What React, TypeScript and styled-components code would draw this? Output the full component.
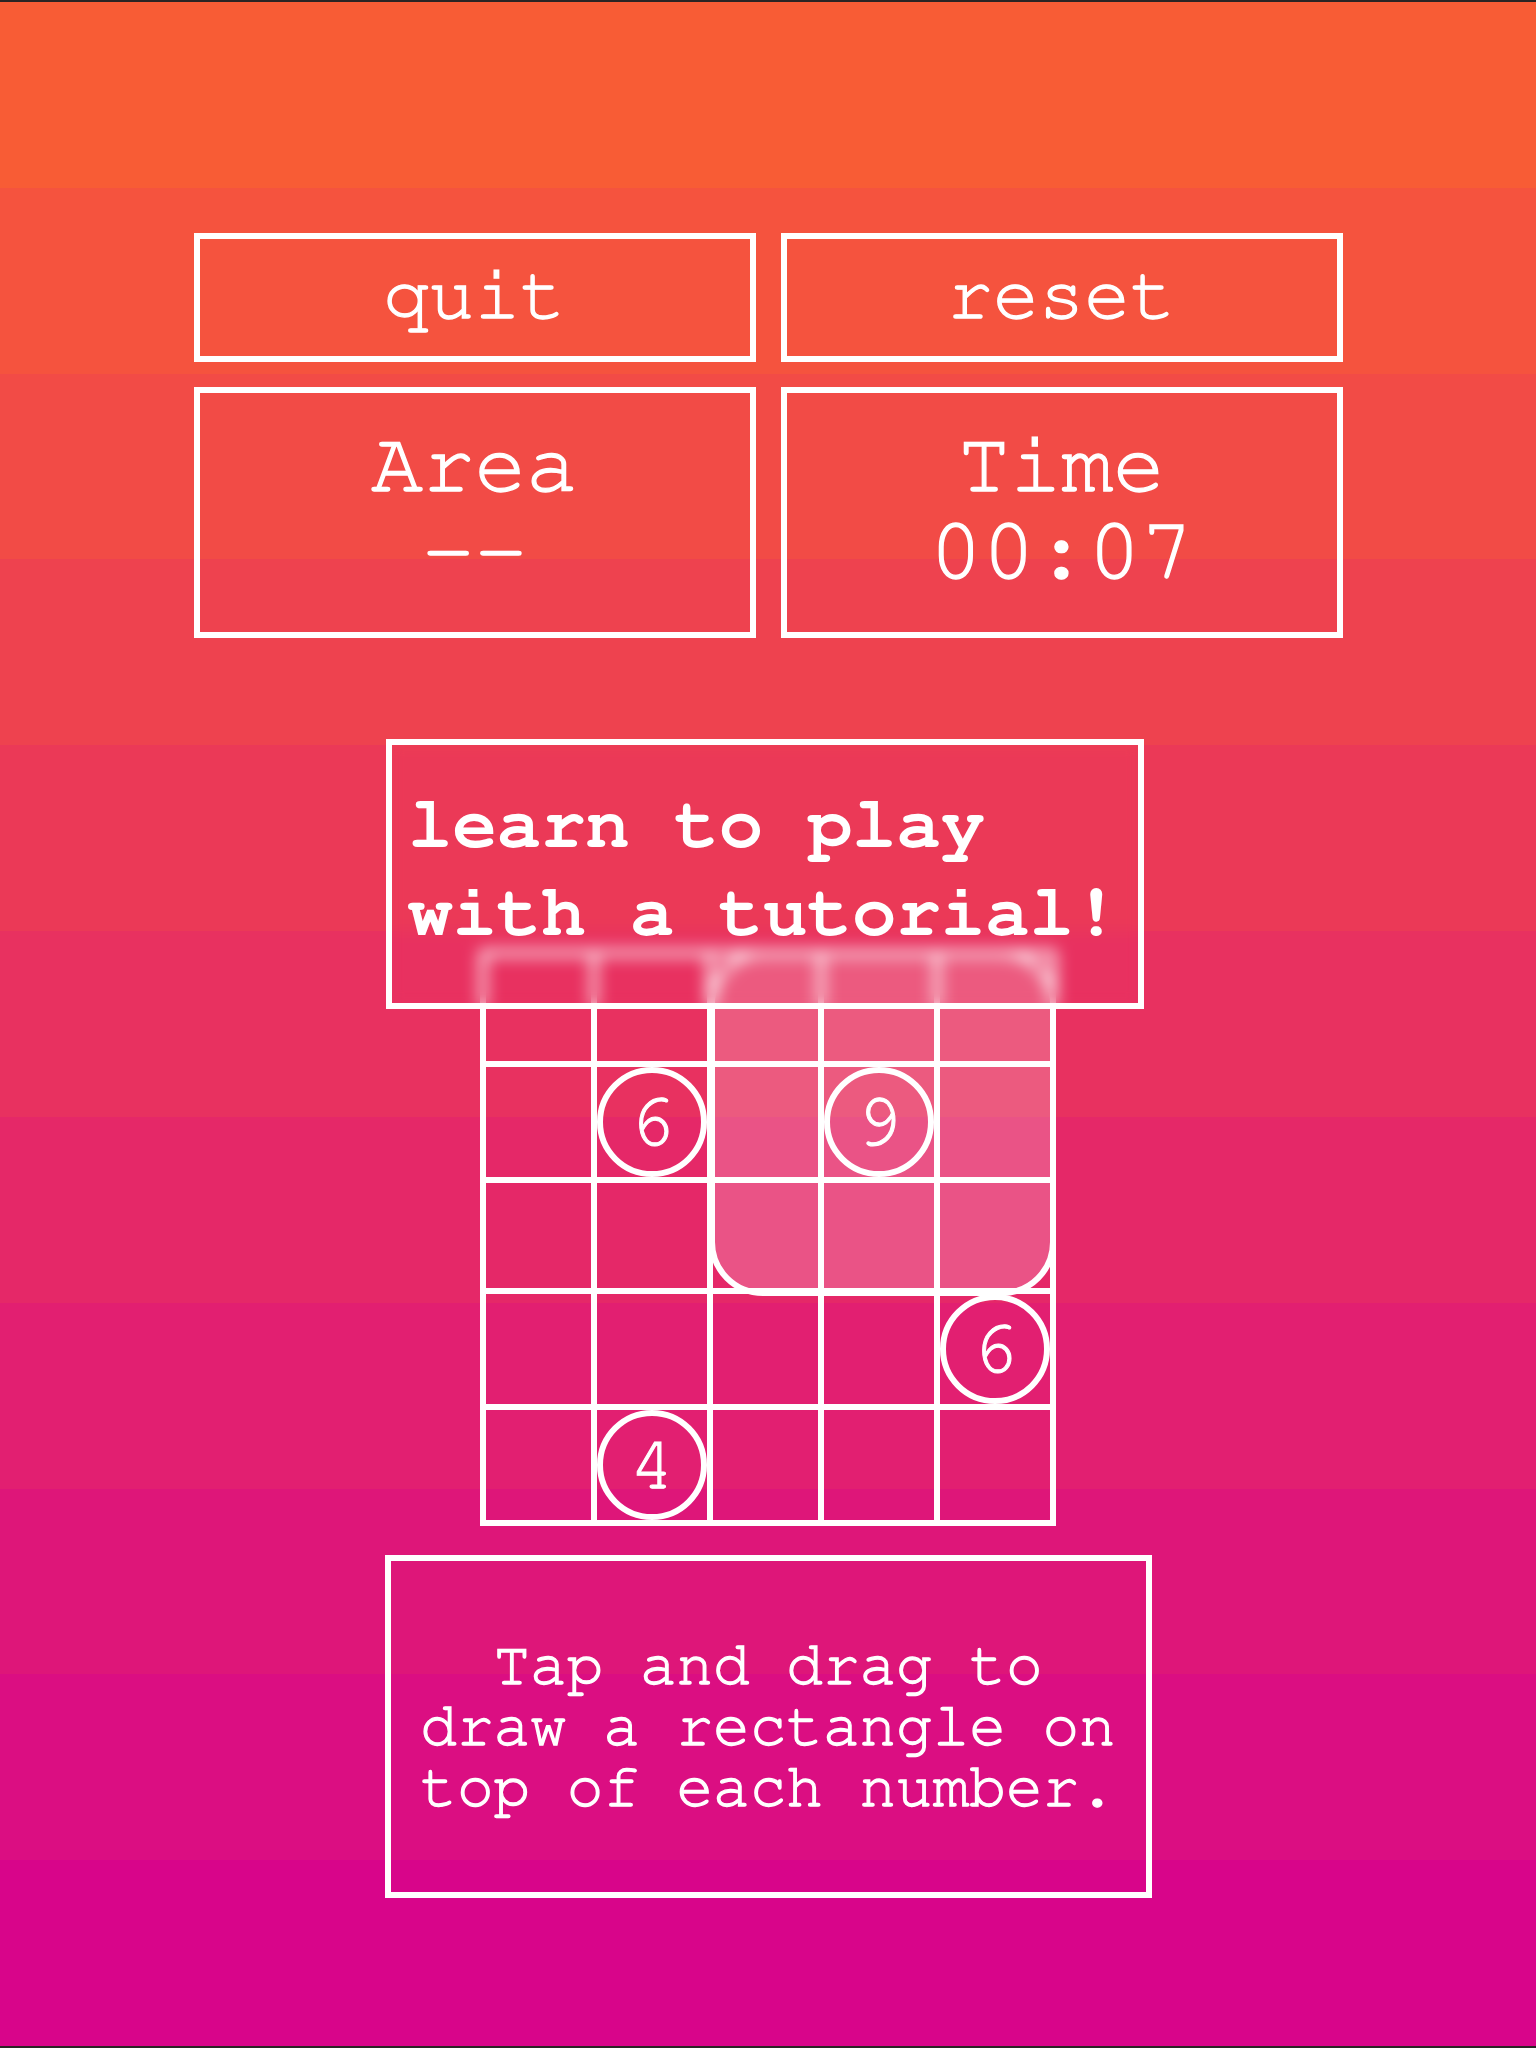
import React from 'react';
import styled, { createGlobalStyle } from 'styled-components';

// 11 flat colour bands from orange at the top to magenta at the bottom
const TOP = [248, 92, 53];
const BOTTOM = [216, 5, 138];
const BANDS = 11;

const bandGradient = (() => {
  const stops: string[] = [];
  for (let i = 0; i < BANDS; i++) {
    const t = i / (BANDS - 1);
    const c = TOP.map((v, k) => Math.round(v + (BOTTOM[k] - v) * t));
    const col = `rgb(${c[0]}, ${c[1]}, ${c[2]})`;
    const from = ((i / BANDS) * 100).toFixed(3);
    const to = (((i + 1) / BANDS) * 100).toFixed(3);
    stops.push(`${col} ${from}%`, `${col} ${to}%`);
  }
  return `linear-gradient(to bottom, ${stops.join(', ')})`;
})();

const typewriter = `"Nimbus Mono PS", "Nimbus Mono L", "FreeMono", "Courier New", Courier, "Liberation Mono", monospace`;

const numbers: Record<string, string> = {
  '1-1': '6',
  '1-3': '9',
  '3-4': '6',
  '4-1': '4',
};

const App: React.FC = () => {
  const cells = [];
  for (let r = 0; r < 5; r++) {
    for (let c = 0; c < 5; c++) {
      const n = numbers[`${r}-${c}`];
      cells.push(
        <Cell key={`${r}-${c}`}>
          {n && <NumberBadge>{n}</NumberBadge>}
        </Cell>
      );
    }
  }

  return (
    <>
      <GlobalStyle />
      <Screen>
        <StatsGrid>
          <ActionButton>quit</ActionButton>
          <ActionButton>reset</ActionButton>
          <StatBox>
            <StatLabel>Area</StatLabel>
            <StatValue>--</StatValue>
          </StatBox>
          <StatBox>
            <StatLabel>Time</StatLabel>
            <StatValue>00:07</StatValue>
          </StatBox>
        </StatsGrid>

        <BoardArea>
          <Board>
            {cells}
            <Selection />
          </Board>
          <TutorialCard>
            learn to play
            <br />
            with a tutorial!
          </TutorialCard>
        </BoardArea>

        <HintCard>
          <HintText>
            Tap and drag to
            <br />
            draw a rectangle on
            <br />
            top of each number.
          </HintText>
        </HintCard>
      </Screen>
    </>
  );
};

const GlobalStyle = createGlobalStyle`
  html, body {
    margin: 0;
    padding: 0;
    background: #d8058a;
  }
  body {
    font-family: ${typewriter};
  }
`;

const Screen = styled.div`
  width: 1536px;
  height: 2048px;
  box-sizing: border-box;
  background: ${bandGradient};
  border-top: 2px solid #2b2424;
  border-bottom: 2px solid #2b2424;
  display: flex;
  flex-direction: column;
  align-items: center;
  padding-top: 231px;
  color: #fff;
  -webkit-text-stroke: 1.3px #fff;
`;

const StatsGrid = styled.div`
  display: grid;
  grid-template-columns: 562px 562px;
  grid-template-rows: 129px 251px;
  column-gap: 25px;
  row-gap: 25px;
`;

const ActionButton = styled.button`
  box-sizing: border-box;
  border: 6px solid #fff;
  background: transparent;
  color: #fff;
  -webkit-text-stroke: 1.3px #fff;
  font-family: ${typewriter};
  font-size: 76px;
  line-height: 80px;
  padding: 0 0 6px;
  cursor: pointer;
`;

const StatBox = styled.div`
  box-sizing: border-box;
  border: 6px solid #fff;
  display: flex;
  flex-direction: column;
  align-items: center;
  justify-content: center;
  padding-bottom: 8px;
`;

const StatLabel = styled.div`
  font-size: 86px;
  line-height: 84px;
`;

const StatValue = styled.div`
  font-size: 88px;
  line-height: 86px;
  margin-top: 2px;
`;

const BoardArea = styled.div`
  position: relative;
  margin-top: 101px;
`;

const Board = styled.div`
  position: relative;
  margin-top: 211px;
  width: 576px;
  height: 576px;
  box-sizing: border-box;
  border: 3px solid #fff;
  display: grid;
  grid-template-columns: repeat(5, 1fr);
  grid-template-rows: repeat(5, 1fr);
`;

const Cell = styled.div`
  box-sizing: border-box;
  border: 3px solid #fff;
  display: flex;
  align-items: center;
  justify-content: center;
`;

const NumberBadge = styled.div`
  flex: none;
  width: 110px;
  height: 110px;
  box-sizing: border-box;
  border: 6px solid #fff;
  border-radius: 50%;
  display: flex;
  align-items: center;
  justify-content: center;
  font-size: 76px;
  line-height: 1;
  -webkit-text-stroke: 1px #fff;
  position: relative;
  z-index: 1;
`;

const Selection = styled.div`
  position: absolute;
  top: -3px;
  left: 226px;
  right: -3px;
  height: 346px;
  box-sizing: border-box;
  border: 6px solid #fff;
  border-radius: 54px;
  background: rgba(255, 255, 255, 0.2);
`;

const TutorialCard = styled.div`
  position: absolute;
  top: 0;
  left: -94px;
  width: 758px;
  height: 270px;
  box-sizing: border-box;
  border: 6px solid #fff;
  padding: 36px 0 0 16px;
  backdrop-filter: blur(8px);
  font-weight: 700;
  font-size: 74px;
  line-height: 88px;
  white-space: nowrap;
  -webkit-text-stroke: 0;
  z-index: 2;
`;

const HintCard = styled.div`
  margin-top: 29px;
  width: 767px;
  height: 343px;
  box-sizing: border-box;
  border: 6px solid #fff;
  display: flex;
  align-items: center;
  justify-content: center;
`;

const HintText = styled.p`
  margin: 0;
  text-align: center;
  font-size: 61px;
  line-height: 61px;
  white-space: nowrap;
`;

export default App;
